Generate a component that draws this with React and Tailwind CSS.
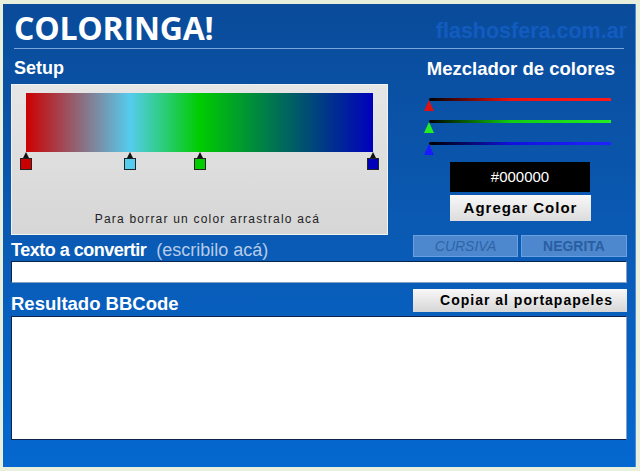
import React from 'react';

const stops = [
  { pos: 0, color: '#cc0000' },
  { pos: 30, color: '#55ccee' },
  { pos: 50, color: '#00cc00' },
  { pos: 100, color: '#0000bb' },
];

const sliders = [
  { track: 'bg-[linear-gradient(to_right,#000000,#ee1111_45%,#ff1a1a)]', fill: '#dd1111' },
  { track: 'bg-[linear-gradient(to_right,#000000,#11cc11_45%,#22ee22)]', fill: '#22ee22' },
  { track: 'bg-[linear-gradient(to_right,#000000,#1111dd_45%,#2222ff)]', fill: '#1a1aff' },
];

function Thumb({ fill }) {
  return (
    <svg className="absolute left-[-5px] top-[2px]" width="10" height="11" viewBox="0 0 10 11">
      <polygon points="5,0 10,11 0,11" fill={fill} />
    </svg>
  );
}

function Marker({ stop }) {
  return (
    <div className="absolute top-[59px] flex flex-col items-center -translate-x-1/2" style={{ left: `${stop.pos}%` }}>
      <svg width="6" height="6" viewBox="0 0 6 6">
        <polygon points="3,0 6,6 0,6" fill="#111" />
      </svg>
      <div className="w-[12px] h-[12px] border border-[#222]" style={{ backgroundColor: stop.color }} />
    </div>
  );
}

export default function App() {
  const gradient = `linear-gradient(to right, ${stops.map((s) => `${s.color} ${s.pos}%`).join(', ')})`;

  return (
    <div className="w-[640px] h-[471px] bg-[#e8efdc] pt-[4px] pl-[3px] font-['Liberation_Sans',Arial,sans-serif]">
      <div className="w-[633px] h-[463px] bg-[linear-gradient(to_bottom,#0a4b9a,#0a5ab4_50%,#0468d0)] border-r border-[#4f88d6] px-[8px] flex flex-col">
        {/* Header */}
        <div className="h-[44px] flex items-end justify-between px-[3px] pb-[1px]">
          <h1 className="text-white font-bold text-[32px] leading-[38px] font-['Open_Sans',sans-serif] tracking-[-0.2px]">COLORINGA!</h1>
          <span className="text-[#125cc0] font-bold text-[21.5px] leading-[26px] mb-[3px] mr-[-3px]">flashosfera.com.ar</span>
        </div>
        <div className="h-px bg-[#7ea6da] mx-[3px]" />

        {/* Setup + mixer */}
        <div className="flex">
          <div className="w-[377px] flex flex-col">
            <div className="h-[35px] flex items-end pl-[3px] pb-[6px]">
              <span className="text-white font-bold text-[18px] leading-[20px]">Setup</span>
            </div>
            <div className="h-[151px] bg-[linear-gradient(to_bottom,#e6e6e6,#d6d6d6)] border border-[#f2f2f2] relative">
              <div className="relative mx-[14px] mt-[8px]">
                <div className="h-[59px] w-full" style={{ background: gradient }} />
                {stops.map((s) => (
                  <Marker key={s.pos} stop={s} />
                ))}
              </div>
              <p className="absolute bottom-[6px] left-0 right-0 text-center text-[12px] tracking-[1.2px] text-[#222] pl-[16px]">
                Para borrar un color arrastralo acá
              </p>
            </div>
          </div>

          <div className="w-[214px] ml-auto flex flex-col">
            <div className="h-[35px] flex items-end justify-end pr-[12px] pb-[5px]">
              <span className="text-white font-bold text-[18.5px] leading-[20px]">Mezclador de colores</span>
            </div>
            <div className="flex flex-col gap-[19px] mt-[14px] mx-[16px]">
              {sliders.map((s, i) => (
                <div key={i} className={`relative h-[3px] rounded-l-full ${s.track}`}>
                  <Thumb fill={s.fill} />
                </div>
              ))}
            </div>
            <div className="ml-[37px] mt-[17px] w-[140px] h-[30px] bg-black flex items-center justify-center text-white text-[15px]">
              #000000
            </div>
            <button className="ml-[37px] mt-[3px] w-[141px] h-[26px] bg-[linear-gradient(to_bottom,#f8f8f8,#dcdcdc)] text-black font-bold text-[15px] tracking-[1px] flex items-center justify-center">
              Agregar Color
            </button>
          </div>
        </div>

        {/* Texto a convertir */}
        <div className="flex items-end justify-between mt-[0px]">
          <div className="flex items-baseline mb-[-3px]">
            <span className="text-white font-bold text-[18px] leading-[20px] tracking-[-0.5px]">Texto a convertir</span>
            <span className="text-[#b7cbe9] text-[18px] leading-[20px] ml-[10px]">(escribilo acá)</span>
          </div>
          <div className="flex gap-[3px]">
            <button className="w-[105px] h-[22px] bg-[#4d88cf] border border-[#6a9fe0] text-[#2f64a6] italic text-[14px]">CURSIVA</button>
            <button className="w-[106px] h-[22px] bg-[#4d88cf] border border-[#6a9fe0] text-[#2b5e9f] font-bold text-[14px]">NEGRITA</button>
          </div>
        </div>
        <div className="mt-[4px] h-[22px] bg-white border border-[#0b2447] border-r-[#8aa0c0] border-b-[#8aa0c0]" />

        {/* Resultado */}
        <div className="flex items-end justify-between mt-[6px]">
          <span className="text-white font-bold text-[18.5px] leading-[20px] mb-[-2px]">Resultado BBCode</span>
          <button className="w-[214px] h-[23px] bg-[linear-gradient(to_bottom,#f8f8f8,#d6d6d6)] text-black font-bold text-[14px] tracking-[1px] flex items-center justify-end pr-[14px]">
            Copiar al portapapeles
          </button>
        </div>
        <div className="mt-[4px] h-[124px] bg-white border border-[#0b2447] border-r-[#8aa0c0] border-b-[#0b2447]" />
      </div>
    </div>
  );
}
